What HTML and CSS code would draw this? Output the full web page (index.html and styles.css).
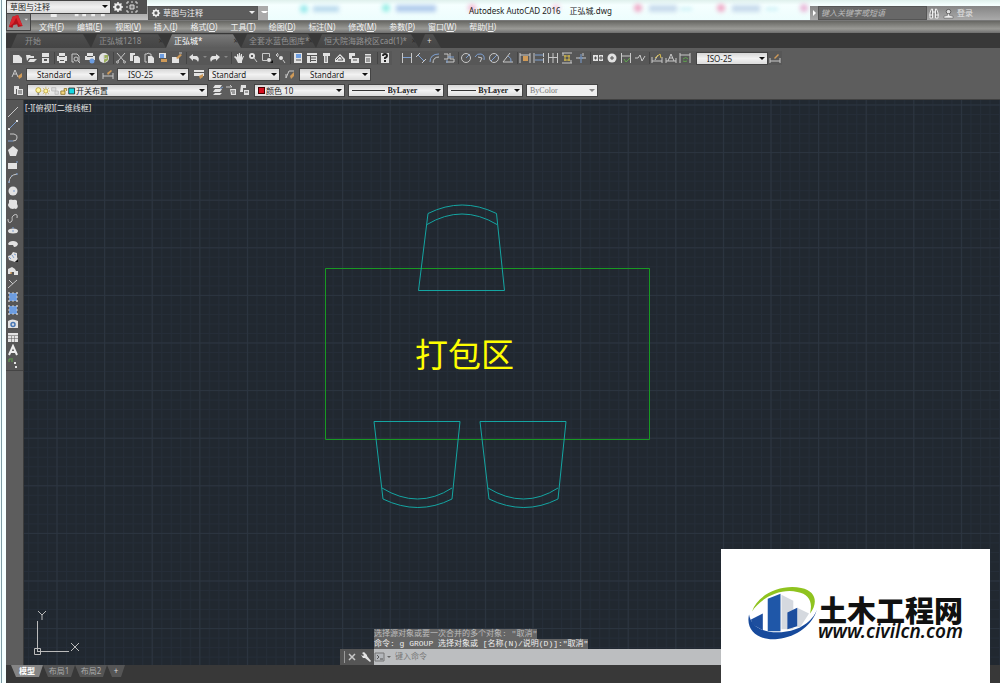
FILE: index.html
```html
<!DOCTYPE html>
<html lang="zh-CN">
<head>
<meta charset="utf-8">
<meta name="viewport" content="width=device-width, initial-scale=1">
<title>Autodesk AutoCAD 2016 正弘城.dwg</title>
<link rel="stylesheet" href="styles.css">
</head>
<body>
<div class="app">
  <header class="titlebar">
    <svg class="backdrop" aria-hidden="true">
      <defs><filter id="soft" x="-50%" y="-50%" width="200%" height="200%"><feGaussianBlur stdDeviation="2"/></filter></defs>
      <g filter="url(#soft)" opacity=".75">
        <circle cx="298" cy="9" r="4" fill="#7fe3e6"/><rect x="307" y="6" width="26" height="6" fill="#a9cfe8"/>
        <circle cx="380" cy="8" r="4" fill="#7de8de"/><rect x="390" y="5" width="40" height="7" fill="#9dbbe6"/>
        <circle cx="466" cy="8" r="4" fill="#f3a9c8"/><circle cx="550" cy="8" r="4" fill="#f5c3da"/>
        <circle cx="632" cy="8" r="4" fill="#ee8fb5"/><rect x="643" y="5" width="28" height="7" fill="#b9cfe6"/><rect x="674" y="8" width="12" height="2" fill="#a5e2ee"/>
        <circle cx="715" cy="8" r="4" fill="#ee8fb5"/><rect x="726" y="5" width="28" height="7" fill="#b9cfe6"/><rect x="760" y="8" width="12" height="2" fill="#a5e2ee"/>
        <circle cx="798" cy="8" r="4" fill="#e5a0cb"/>
      </g>
    </svg>
    <div class="quick">
      <svg class="hidden-row" viewBox="0 0 120 8" aria-hidden="true"><path d="M5 0h8v4H5zM37 0h5v3h-5zM47 0h5v3h-5zM59 0h5v3h-5zM72 0h5v3h-5z" fill="#eee"/></svg>
      <label class="combo dark"><svg class="lead" viewBox="0 0 12 12"><circle cx="6" cy="6" r="3" fill="none" stroke="#eee" stroke-width="2"/><path d="M6 1v2M6 9v2M1 6h2M9 6h2M2.500 2.500l1.300 1.300M8.200 8.200l1.300 1.300M9.500 2.500L8.200 3.800M3.800 8.200L2.500 9.500" stroke="#eee" stroke-width="1.500"/></svg>
        <select aria-label="快速访问工作空间"><option>草图与注释</option></select></label>
      <button class="drop" aria-label="自定义快速访问"></button>
    </div>
    <h1 class="caption"><span>Autodesk AutoCAD 2016</span><span>正弘城.dwg</span></h1>
    <div class="account">
      <button class="expand" aria-label="展开搜索"><svg viewBox="0 0 8 12"><path d="M3 3l3 3-3 3z" fill="#fff"/></svg></button>
      <input class="search" type="search" aria-label="搜索" placeholder="键入关键字或短语">
      <button class="icon" aria-label="查找"><svg viewBox="0 0 12 12"><path d="M2 11V6l1.500-4h1V11zM7.500 11V2h1L10 6v5zM5 5h2M1 8h3.500M7.500 8H11" fill="#777" stroke="#eee"/></svg></button>
      <button class="login"><svg viewBox="0 0 12 12"><circle cx="6" cy="4" r="2.500" fill="#ddd" stroke="#333" stroke-width=".7"/><path d="M5 6h2v2l4 1v2H1V9l4-1z" fill="#eee" stroke="#444" stroke-width=".5"/></svg>登录</button>
    </div>
  </header>

  <div class="workspace">
    <label class="combo"><select aria-label="工作空间"><option>草图与注释</option></select></label>
    <button class="icon" aria-label="工作空间设置"><svg viewBox="0 0 12 12"><circle cx="6" cy="6" r="2.800" fill="none" stroke="#eee" stroke-width="2"/><path d="M6 1v2M6 9v2M1 6h2M9 6h2M2.500 2.500l1.300 1.300M8.200 8.200l1.300 1.300M9.500 2.500L8.200 3.800M3.800 8.200L2.500 9.500" stroke="#eee" stroke-width="1.500"/></svg></button>
    <button class="icon" aria-label="工作空间外观"><svg viewBox="0 0 12 12"><path d="M1 3V1h2M9 1h2v2M11 9v2H9M3 11H1V9M5 1h2M5 11h2M1 5v2M11 5v2" fill="none" stroke="#ddd"/><path d="M4 4h4v4H4z" fill="#777" stroke="#ddd"/></svg></button>
  </div>
  <button class="appmenu" aria-label="应用程序菜单"><svg viewBox="0 0 24 16"><path d="M2 13L6 2l6-2 5 12-5 1-1-3-4 1-1 3z" fill="#b3121b"/><path d="M6 2l6-2 5 12-4-2-3-7-3 6-5 4z" fill="#d9272f"/><path d="M19 4h4l-2 2z" fill="#ddd"/></svg></button>

  <nav class="menubar" aria-label="菜单">
    <a href="#">文件(<u>F</u>)</a><a href="#">编辑(<u>E</u>)</a><a href="#">视图(<u>V</u>)</a><a href="#">插入(<u>I</u>)</a><a href="#">格式(<u>O</u>)</a><a href="#">工具(<u>T</u>)</a><a href="#">绘图(<u>D</u>)</a><a href="#">标注(<u>N</u>)</a><a href="#">修改(<u>M</u>)</a><a href="#">参数(<u>P</u>)</a><a href="#">窗口(<u>W</u>)</a><a href="#">帮助(<u>H</u>)</a>
  </nav>

  <nav class="filetabs" aria-label="文件">
    <a class="ftab start" href="#">开始</a>
    <a class="ftab" href="#">正弘城1218<i>×</i></a>
    <a class="ftab active" href="#">正弘城*<i>×</i></a>
    <a class="ftab" href="#">全套水蓝色图库*<i>×</i></a>
    <a class="ftab wide" href="#">恒大院海路校区cad(1)*<i>×</i></a>
    <a class="ftab plus" href="#" aria-label="新建图形">+</a>
  </nav>

  <div class="toolbars">
    <div class="bar">
      <div class="group">
        <button class="icon" aria-label="新建"><svg viewBox="0 0 12 12"><path class="f" d="M2 3h6l3 3v5H2z"/></svg></button>
        <button class="icon" aria-label="打开"><svg viewBox="0 0 12 12"><path class="f" d="M1 3h4l1 1h3v2H4l-2 3zM5 7h7l-3 3H3z"/></svg></button>
        <button class="icon" aria-label="保存"><svg viewBox="0 0 12 12"><path class="f" d="M3 1h7v4H3zM3 6h7v5H3z"/><path class="k" d="M5 7h3v2H5z"/></svg></button>
        <span class="sep"></span>
        <button class="icon" aria-label="打印"><svg viewBox="0 0 12 12"><path class="f" d="M3 1h6v3h2v5H9v2H3V9H1V4h2z"/><path class="k" d="M3 4h6v1H3zM4 8h4v1H4z"/></svg></button>
        <button class="icon" aria-label="打印预览"><svg viewBox="0 0 12 12"><path class="s" d="M9 10V4L7 2H2v8h2"/><circle class="s" cx="6" cy="7" r="2"/><path class="s" d="M8 9l2 2"/></svg></button>
        <button class="icon" aria-label="发布"><svg viewBox="0 0 12 12"><path class="f" d="M3 1h6v3h2v4H1V4h2z"/><path class="k" d="M3 4h6v1H3z"/><circle class="b" cx="8" cy="9" r="2.500"/></svg></button>
        <button class="icon" aria-label="三维打印"><svg viewBox="0 0 12 12"><circle class="f" cx="6" cy="6" r="5"/><path class="g" d="M6 3h4v5l-4 3z"/><path class="s" d="M6 3v4l3-1"/></svg></button>
        <span class="sep"></span>
        <button class="icon" aria-label="剪切"><svg viewBox="0 0 12 12"><path class="s" d="M2 1l7 8M10 1L3 9"/><circle class="s" cx="2.500" cy="10" r="1"/><circle class="s" cx="9.500" cy="10" r="1"/></svg></button>
        <button class="icon" aria-label="复制"><svg viewBox="0 0 12 12"><path class="f" d="M1 1h5v8H1zM5 4h4l2 2v5H5z"/><path class="d" d="M4.500 10V3.500H8"/></svg></button>
        <button class="icon" aria-label="粘贴"><svg viewBox="0 0 12 12"><path class="s" d="M4 10H2V2h2l1-1 2 1h1v2"/><path class="f" d="M5 4h4l2 2v5H5z"/></svg></button>
        <button class="icon" aria-label="特性匹配"><svg viewBox="0 0 12 12"><path class="f" d="M2 1h7v5H2z"/><path class="b" d="M3 2h4v4H3z"/><path class="o" d="M4 7h6v3H4z"/></svg></button>
        <button class="icon" aria-label="块编辑器"><svg viewBox="0 0 12 12"><path class="f" d="M1 5h7v6H1z"/><path class="o" d="M5 6l4-4 2 1-4 4z"/><path class="s" d="M8 1h3"/></svg></button>
        <span class="sep"></span>
        <button class="icon" aria-label="放弃"><svg viewBox="0 0 12 12"><path class="f" d="M1 5l4-3v2h4q3 2 1 6Q9 7 5 7v2z"/></svg></button>
        <button class="tiny" aria-label="放弃列表"></button>
        <button class="icon" aria-label="重做"><svg viewBox="0 0 12 12"><path class="f" d="M11 5L7 2v2H3Q0 6 2 10q1-3 5-3v2z"/></svg></button>
        <button class="tiny" aria-label="重做列表"></button>
        <span class="sep"></span>
        <button class="icon" aria-label="平移"><svg viewBox="0 0 12 12"><path class="f" d="M3 7L1 5l1-1 2 1V2h1v3l1-4h1v4l1-3h1v4l1-2h1L9 9v2H5z"/></svg></button>
        <button class="icon" aria-label="缩放"><svg viewBox="0 0 12 12"><circle class="f" cx="5" cy="4" r="3"/><path class="s" d="M7 6l3 4"/><path class="k" d="M4 3h2v2H4z"/></svg></button>
        <button class="icon" aria-label="窗口缩放"><svg viewBox="0 0 12 12"><path class="s" d="M6 8.500H1.500v-7h7V5"/><circle class="f" cx="8" cy="8" r="2"/><path class="kk" d="M9 11h3V8z"/></svg></button>
        <button class="icon" aria-label="上一个"><svg viewBox="0 0 12 12"><path class="s" d="M4 3H1l2-2M1 3l2 2"/><circle class="f" cx="6" cy="6" r="2"/><path class="s" d="M8 8l2 3"/></svg></button>
        <span class="sep"></span>
        <button class="icon" aria-label="特性"><svg viewBox="0 0 12 12"><path class="f" d="M2 1h8v10H2z"/><path class="b" d="M4 2h5v4H4z"/><path class="d" d="M4 8h5"/></svg></button>
        <button class="icon" aria-label="设计中心"><svg viewBox="0 0 12 12"><path class="f" d="M1 1h10v10H1z"/><path class="d" d="M1 3.500h10M4.500 3v7M5 6h5M5 8.500h5"/></svg></button>
        <button class="icon" aria-label="工具选项板"><svg viewBox="0 0 12 12"><path class="f" d="M3 1h7v3H8v7H4V4H3z"/><path class="d" d="M5 5h2M5 7h2M5 9h2"/></svg></button>
        <button class="icon" aria-label="图纸集"><svg viewBox="0 0 12 12"><path class="f" d="M1 7l5-5 5 5v3H1z"/><path class="d" d="M2 8l4-4 3 4H4"/></svg></button>
        <button class="icon" aria-label="标记集"><svg viewBox="0 0 12 12"><path class="f" d="M1 1h6v3H4v2h7v5H3V7H1z"/><path class="d" d="M5 8h4M8 3h3"/></svg></button>
        <button class="icon" aria-label="计算器"><svg viewBox="0 0 12 12"><path class="f" d="M3 2h6v9H3z"/><path class="d" d="M3 4h6M5 6v4M7 6v4"/></svg></button>
        <span class="sep"></span>
        <button class="icon" aria-label="帮助"><svg viewBox="0 0 12 12"><path class="f" d="M2 1h8v10H2z"/><path class="kk2" d="M4 4q0-2 2-2t2 2q0 1-2 2v1M6 8v2"/></svg></button>
      </div>
      <div class="group">
        <button class="icon" aria-label="线性"><svg viewBox="0 0 12 12"><path class="s" d="M1.500 1v10M10.500 1v10"/><path class="bs" d="M2 5.500h8"/></svg></button>
        <button class="icon" aria-label="对齐"><svg viewBox="0 0 12 12"><path class="s" d="M1 5l4-4M7 11l4-4"/><path class="bs" d="M3 3l6 6"/></svg></button>
        <button class="icon" aria-label="弧长"><svg viewBox="0 0 12 12"><path class="bs" d="M1 10Q1 2 10 2"/><path class="s" d="M4 11q0-6 6-6"/></svg></button>
        <button class="icon" aria-label="坐标"><svg viewBox="0 0 12 12"><path class="s" d="M1 2h4v5H1M7 1v6h4M3 10h8V7"/><path class="bs" d="M5 5h6M4 11V8"/></svg></button>
        <span class="sep"></span>
        <button class="icon" aria-label="半径"><svg viewBox="0 0 12 12"><circle class="s" cx="6" cy="6" r="4.500"/><path class="bs" d="M6 6l4-4"/></svg></button>
        <button class="icon" aria-label="折弯"><svg viewBox="0 0 12 12"><path class="bs" d="M1 5q2-4 6-3 4 1 3 6"/><path class="s" d="M4 5l4 1-2 4"/></svg></button>
        <button class="icon" aria-label="直径"><svg viewBox="0 0 12 12"><circle class="s" cx="6" cy="6" r="4.500"/><path class="bs" d="M3 9l6-6"/></svg></button>
        <button class="icon" aria-label="角度"><svg viewBox="0 0 12 12"><path class="s" d="M8 1L1 10h10"/><path class="bs" d="M6 4q4 2 3 6"/></svg></button>
        <span class="sep"></span>
        <button class="icon" aria-label="快速标注"><svg viewBox="0 0 12 12"><path class="s" d="M1 1v10M11 1v10M1 3h10"/><path class="o" d="M4 4h5v5H4z"/></svg></button>
        <button class="icon" aria-label="基线"><svg viewBox="0 0 12 12"><path class="s" d="M1 1v10M10.500 1v4M10.500 6v5"/><path class="bs" d="M2 3h8M2 8h8"/></svg></button>
        <button class="icon" aria-label="连续"><svg viewBox="0 0 12 12"><path class="s" d="M1.500 1v10M6 1v10M10.500 1v10M1 5.500h10"/></svg></button>
        <button class="icon" aria-label="等距标注"><svg viewBox="0 0 12 12"><path class="s" d="M1 1h10M1 11h10M2 1v3M10 8v3"/><path class="ys" d="M3 4h6M3 8h6M4 3v6M8 3v6"/></svg></button>
        <button class="icon" aria-label="折断标注"><svg viewBox="0 0 12 12"><path class="s" d="M1 6h4M7 6h4M8 1v3"/><path class="bs" d="M6 2v9M4 6h4"/></svg></button>
        <span class="sep"></span>
        <button class="icon" aria-label="公差"><svg viewBox="0 0 12 12"><path class="f" d="M1 3h10v6H1z"/><path class="d" d="M2 6h3M3.500 4.500v3M6.500 3v6M8 5h2v2H8z"/></svg></button>
        <button class="icon" aria-label="圆心标记"><svg viewBox="0 0 12 12"><circle class="f" cx="6" cy="6" r="4.500"/><path class="d" d="M6 4v4M4 6h4"/></svg></button>
        <button class="icon" aria-label="检验"><svg viewBox="0 0 12 12"><path class="s" d="M1.500 1v10M10.500 1v10M1 4h10"/><path class="gs" d="M4 7l2 3 4-4"/></svg></button>
        <button class="icon" aria-label="折弯线性"><svg viewBox="0 0 12 12"><path class="s" d="M1 6h3l2-3 2 6 3-5"/></svg></button>
        <span class="sep"></span>
        <button class="icon" aria-label="编辑标注"><svg viewBox="0 0 12 12"><path class="s" d="M1 5v6M11 5v6M1 9h10M4 8l3-5"/><path class="ys" d="M4 6l5-4 1 4"/></svg></button>
        <button class="icon" aria-label="编辑标注文字"><svg viewBox="0 0 12 12"><path class="s" d="M1 6v5M11 6v5M1 9h10M3 9l3-7 3 7M4 6h4"/></svg></button>
        <button class="icon" aria-label="标注更新"><svg viewBox="0 0 12 12"><path class="s" d="M1 1v10M11 1v10M1 3h10"/><path class="gs" d="M4 7q3-3 5 0M8 9q-2 1-4 0"/></svg></button>
        <label class="combo w70 pad"><select aria-label="标注样式"><option>ISO-25</option></select></label>
        <button class="icon" aria-label="标注样式管理"><svg viewBox="0 0 12 12"><path class="s" d="M1 6v5M11 6v5M1 9h10"/><path class="o" d="M5 6l4-4 1 1-4 4z"/></svg></button>
      </div>
    </div>

    <div class="bar styles">
      <button class="icon" aria-label="文字样式"><svg viewBox="0 0 12 12"><path class="s" d="M1 9l3-7 3 7M2 6h4"/><path class="o" d="M7 8l4-3v4l-3 2z"/></svg></button>
      <label class="combo w70 pad"><select aria-label="文字样式"><option>Standard</option></select></label>
      <button class="icon" aria-label="标注样式"><svg viewBox="0 0 12 12"><path class="s" d="M1 5v6M11 5v6M1 8h10"/><path class="o" d="M5 5l4-3 1 1-4 4z"/></svg></button>
      <label class="combo w70 pad"><select aria-label="标注样式名"><option>ISO-25</option></select></label>
      <button class="icon" aria-label="表格样式"><svg viewBox="0 0 12 12"><path class="f" d="M1 2h10v6H1z"/><path class="d" d="M1 4.500h10"/><path class="o" d="M6 8l4-2v3l-3 2z"/></svg></button>
      <label class="combo w70"><select aria-label="表格样式"><option>Standard</option></select></label>
      <button class="icon" aria-label="多重引线样式"><svg viewBox="0 0 12 12"><path class="s" d="M2 10l3-7h5M2 10V6"/><path class="o" d="M6 8l4-4v4l-3 3z"/></svg></button>
      <label class="combo w70 pad"><select aria-label="多重引线样式"><option>Standard</option></select></label>
    </div>

    <div class="bar props">
      <button class="icon" aria-label="图层特性"><svg viewBox="0 0 12 12"><path class="f" d="M2 2h5v3H4v5H2zM5 5h6v6H5z"/><path class="d" d="M6 7h4M6 9h4"/></svg></button>
      <label class="combo layer"><svg class="lead" viewBox="0 0 50 12"><circle cx="5" cy="5" r="3" fill="#fff7a0" stroke="#b89c2e"/><path d="M4 8h2v3H4z" fill="#888"/><circle cx="14" cy="6" r="2.500" fill="#fff3a0" stroke="#b99b30"/><path d="M14 1v1M14 10v1M9 6h1M18 6h1M10.500 2.500l1 1M16.500 8.500l1 1M17.500 2.500l-1 1M11.500 8.500l-1 1" stroke="#b99b30"/><path d="M21 2h5v4h-5zM25 6h4v4h-4z" fill="#ddd" stroke="#bbb"/><path d="M32 6h5v4h-5zM36 6V3h3v3" fill="#f4d780" stroke="#8b7428"/><path d="M41.500 2.500h7v7h-7z" fill="#14d8e2" stroke="#222"/></svg>
        <select aria-label="图层"><option>开关布置</option></select></label>
      <span class="trio">
        <button class="icon" aria-label="置为当前图层"><svg viewBox="0 0 12 12"><path class="f" d="M3 1h7L8 4H1zM3 5h7L8 8H1zM3 9h7l-2 2H1z"/><path class="bs" d="M8 5l3-2"/></svg></button>
        <button class="icon" aria-label="上一个图层"><svg viewBox="0 0 12 12"><path class="s" d="M1 3h6L5 1"/><path class="f" d="M5 5h6v6H6z"/><path class="d" d="M6 7h4M7 9h3"/></svg></button>
        <button class="icon" aria-label="图层状态"><svg viewBox="0 0 12 12"><path class="f" d="M3 1h5v3H5v4H2zM6 6h5v5H6z"/><path class="d" d="M7 8h3"/></svg></button>
      </span>
      <label class="combo w90 color"><span class="swatch"></span><select aria-label="颜色"><option>颜色 10</option></select></label>
      <label class="combo w95 line"><span class="rule"></span><select aria-label="线型"><option>ByLayer</option></select></label>
      <label class="combo w75 line"><span class="rule"></span><select aria-label="线宽"><option>ByLayer</option></select></label>
      <label class="combo w70 off"><select aria-label="打印样式" disabled><option>ByColor</option></select></label>
    </div>
  </div>

  <div class="work">
    <aside class="palette">
      <div class="tools">
        <button class="icon" aria-label="直线"><svg viewBox="0 0 12 12"><path class="s" d="M1 11L11 1"/></svg></button>
        <button class="icon" aria-label="构造线"><svg viewBox="0 0 12 12"><path class="bs" d="M2 10l8-8"/><path class="f" d="M1 9h2v2H1zM9 1h2v2H9z"/></svg></button>
        <button class="icon" aria-label="多段线"><svg viewBox="0 0 12 12"><path class="s" d="M3 2h4q4 1 3 4 0 3-4 3"/><path class="bs" d="M6 9H1"/></svg></button>
        <button class="icon" aria-label="多边形"><svg viewBox="0 0 12 12"><path class="f" d="M6 1l5 4-2 6H3L1 5z"/></svg></button>
        <button class="icon" aria-label="矩形"><svg viewBox="0 0 12 12"><path class="f" d="M1 4h9v6H1z"/><path class="bs" d="M9 3h2"/></svg></button>
        <button class="icon" aria-label="圆弧"><svg viewBox="0 0 12 12"><path class="s" d="M2 11Q2 3 10 2"/><path class="bs" d="M1 10h2M9 2h2M4 4h1"/></svg></button>
        <button class="icon" aria-label="圆"><svg viewBox="0 0 12 12"><circle class="f" cx="6" cy="6" r="4.500"/><path class="bs" d="M6 6h2"/></svg></button>
        <button class="icon" aria-label="修订云线"><svg viewBox="0 0 12 12"><path class="f" d="M2 2q2-1 4 0 3-1 4 1v3q2 3-1 5-2-1-3 0-3 0-4-2-2-2 0-4z"/></svg></button>
        <button class="icon" aria-label="样条曲线"><svg viewBox="0 0 12 12"><path class="s" d="M1 7q0 5 3 3c3-3-1-4 3-7q4-2 3 3"/></svg></button>
        <button class="icon" aria-label="椭圆"><svg viewBox="0 0 12 12"><ellipse class="f" cx="6" cy="6" rx="5" ry="2.500"/><path class="bs" d="M6 2v2M5 6h2"/></svg></button>
        <button class="icon" aria-label="椭圆弧"><svg viewBox="0 0 12 12"><path class="f" d="M1 6q1-3 5-3t5 3q-1 3-4 3L6 7H2z"/></svg></button>
        <button class="icon" aria-label="插入块"><svg viewBox="0 0 12 12"><path class="f" d="M1 5l3-1 2-3 4 1v4l1 3-3 2-3-1-3-1z"/><path class="bs" d="M5 4l2 3M2 6l2 2M7 3l2 1"/><path class="kk" d="M8 11h3V8z"/></svg></button>
        <button class="icon" aria-label="创建块"><svg viewBox="0 0 12 12"><path class="f" d="M1 4l4-2 3 2 1 2h2v4H7V7H4v2H1z"/><circle class="o" cx="4" cy="8" r="1"/></svg></button>
        <button class="icon" aria-label="点"><svg viewBox="0 0 12 12"><path class="s" d="M2 2l4 4M1 10l9-8"/></svg></button>
        <button class="icon" aria-label="图案填充"><svg viewBox="0 0 12 12"><path class="b" d="M2 2h8v8H2z"/><path class="s" d="M1 2h10M1 10h10M2 1v10M10 1v10" stroke-dasharray="2 2"/></svg></button>
        <button class="icon" aria-label="渐变色"><svg viewBox="0 0 12 12"><path class="b" d="M2 2h8v8H2z"/><path class="s" d="M1 2h10M1 10h10M2 1v10M10 1v10" stroke-dasharray="2 2"/></svg></button>
        <button class="icon" aria-label="面域"><svg viewBox="0 0 12 12"><path class="f" d="M1 3q4-3 10 0v7H1z"/><circle cx="6" cy="6.500" r="2" fill="#d6dbe4" stroke="#4877b5" stroke-width="1.500"/></svg></button>
        <button class="icon" aria-label="表格"><svg viewBox="0 0 12 12"><path class="f" d="M1 2h10v9H1z"/><path class="d" d="M1 4.500h10M4.500 5v6M7.500 5v6M1 7.500h10" opacity=".5"/></svg></button>
        <button class="icon" aria-label="多行文字"><svg viewBox="0 0 12 12"><path d="M2 11L6 2l4 9M3.500 8h5" fill="none" stroke="#eee" stroke-width="2"/></svg></button>
        <button class="icon" aria-label="添加选定对象"><svg viewBox="0 0 12 12"><path class="gs" d="M2 5V2h4M4 4h2"/><path class="f" d="M7 5h2v2H7zM8 9h2v2H8z"/></svg></button>
      </div>
    </aside>

    <main class="canvas">
      <svg class="drawing" aria-label="图形">
        <defs>
          <pattern id="minor" width="9.520" height="9.520" patternUnits="userSpaceOnUse" x="32.500" y="4.500"><path d="M0 .5h9.520M.5 0v9.520" stroke="#252d38" fill="none"/></pattern>
          <pattern id="major" width="47.600" height="47.600" patternUnits="userSpaceOnUse" x="32.500" y="4.500"><path d="M0 .5h47.600M.5 0v47.600" stroke="#2c3540" fill="none"/></pattern>
        </defs>
        <rect width="100%" height="100%" fill="url(#minor)"/>
        <rect width="100%" height="100%" fill="url(#major)"/>
        <path class="table" d="M301.500 168.500h324v171h-324z"/>
        <g class="chairs">
          <path d="M394.500 190.500h86L472.500 113.500Q438 96.500 404 113.500zM403 124.500Q438 103.500 473 124.500"/>
          <path id="chair" d="M350 321.500h86L428 399Q394 416 359 399zM358 388Q394 410 428 388"/>
          <use href="#chair" x="106"/>
        </g>
        <text class="zone" x="391" y="267">打包区</text>
      </svg>
      <span class="viewlabel">[-][俯视][二维线框]</span>
      <svg class="ucs" viewBox="0 0 48 48" aria-hidden="true"><path d="M4.500 12v31M4.500 42.500H36M1.500 39.500h6v6h-6zM5 2l4 4 4-4M9 6v5M38 34l8 8M46 34l-8 8"/></svg>
      <div class="command">
        <output class="history"><span>选择源对象或要一次合并的多个对象: "取消"</span><span>命令: g GROUP 选择对象或 [名称(N)/说明(D)]:"取消"</span></output>
        <div class="prompt">
          <span class="grip"></span>
          <button class="icon" aria-label="关闭"><svg viewBox="0 0 12 12"><path class="s" d="M3 3l6 6M9 3L3 9" stroke-width="1.500"/></svg></button>
          <button class="icon" aria-label="自定义"><svg viewBox="0 0 12 12"><path class="f" d="M2 2l2-1 3 3v1l4 5-1 1-5-4H3L1 4l2 1 1-1z"/></svg></button>
          <label class="entry"><svg viewBox="0 0 18 12"><path d="M1 2h9v8H1z" fill="#b4b7bb" stroke="#777"/><path d="M3 4l2 2-2 2M6 8h3" fill="none" stroke="#555"/><path d="M13 5h4l-2 2z" fill="#666"/></svg><input type="text" aria-label="命令" placeholder="键入命令"></label>
        </div>
      </div>
    </main>
  </div>

  <footer class="layouts">
    <a class="ltab active" href="#">模型</a><a class="ltab" href="#">布局1</a><a class="ltab" href="#">布局2</a><a class="ltab add" href="#" aria-label="新建布局">+</a>
  </footer>
</div>

<div class="sponsor">
  <svg viewBox="0 0 72 60" aria-hidden="true">
    <path d="M6 26C12 8 36-2 56 2c16 3 17 16 9 26C68 16 64 8 52 6 34 2 14 13 6 26z" fill="#8fc31f"/>
    <path d="M3 29C-1 46 14 56 32 54 52 52 68 39 72 24 68 36 54 46 36 47 16 48 5 41 3 29z" fill="#174a9c"/>
    <path d="M36 9l12 6v29H36zM52 22l12 6-9 14h-3z" fill="#d5d9df"/>
    <path d="M22 13l13-5v38H22z" fill="#1f57a8"/><path d="M5 34l12-6v17L6 39z" fill="#1d4e9e"/><path d="M42 27l10-5v19l-10 3z" fill="#1d4e9e"/>
  </svg>
  <div class="brand"><strong>土木工程网</strong><em>www.civilcn.com</em></div>
</div>
</body>
</html>
```
FILE: styles.css
```css
* { box-sizing: border-box; }

body {
  margin: 0;
  background: #eefafa;
  color: #e4e4e4;
  font: 8px/12px "Noto Sans", "Noto Sans CJK SC", sans-serif;
  overflow: hidden;
}

a { color: inherit; text-decoration: none; }
button, input, select { font: inherit; color: inherit; margin: 0; padding: 0; border: 0; border-radius: 0; background: none; }
svg { display: block; }

.app {
  position: relative;
  display: flex;
  flex-direction: column;
  height: 100vh;
  margin-left: 2px;
  border-left: 4px solid #f5ffff;
  outline: 1px solid #7d9ba5;
}

/* icons */
.icon { width: 14px; height: 14px; flex: none; display: grid; place-items: center; }
.icon svg { width: 12px; height: 12px; }
.f { fill: #e2e2e2; }
.k { fill: #555; }
.kk { fill: #111; }
.b { fill: #6d9de0; }
.g { fill: #9aae5c; }
.o { fill: #cf9a58; }
.s, .bs, .gs, .ys, .d, .kk2 { fill: none; stroke: #c8c8c8; }
.bs { stroke: #7d9fd0; }
.gs { stroke: #5ea34d; }
.ys { stroke: #d9bd4b; }
.d { stroke: #555; }
.kk2 { stroke: #222; stroke-width: 2; }

/* drop-down lists */
.combo { position: relative; display: block; flex: none; height: 13px; background: linear-gradient(#d6d6d6, #f2f2f2 50%, #dcdcdc); color: #222; border: 1px solid #444; }
.combo select { appearance: none; display: block; width: 100%; height: 11px; line-height: 11px; padding-left: 3px; opacity: 1; color: inherit; }
.combo::after { content: ""; position: absolute; right: 2px; top: 4px; border: 3px solid transparent; border-top: 3px solid #111; border-bottom: 0; }
.combo .lead { position: absolute; left: 2px; top: 1px; height: 10px; }
.w70 { width: 72px; }
.w75 { width: 76px; }
.w90 { width: 91px; }
.w95 { width: 96px; }
.pad select { padding-left: 10px; }

/* title bar */
.titlebar { position: relative; height: 21px; padding-top: 6px; display: flex; background: linear-gradient(#dff0ec, #f5ffff 25%, #edfdfd); border-bottom: 1px solid #777; }
.backdrop { position: absolute; inset: 0; width: 100%; height: 100%; }
.quick { position: relative; display: flex; justify-content: flex-end; width: 262px; background: linear-gradient(#909090, #c2c2c2); }
.hidden-row { flex: none; align-self: flex-end; width: 112px; height: 6px; }
.quick .combo { width: 110px; height: 14px; border-color: #555; }
.dark { background: #5c5c5c; color: #eee; }
.quick .dark select { padding-left: 14px; }
.dark::after { border-top-color: #eee; }
.drop { width: 10px; background: #aaa; }
.drop::after { content: ""; display: block; margin-left: 3px; border: 2px solid transparent; border-top-color: #fff; }
.caption { position: relative; flex: 1; margin: 0; display: flex; gap: 9px; padding-left: 201px; font-size: 8px; line-height: 10px; font-weight: 400; color: #222; white-space: nowrap; }
.account { position: relative; display: flex; width: 190px; background: linear-gradient(#858585, #aaa); }
.expand { width: 8px; }
.expand svg { width: 8px; }
.search { width: 109px; padding-left: 2px; background: #686868; border: 1px solid #555; font-style: italic; outline: 0; }
.search::placeholder { color: #bbb; opacity: 1; }
.login { display: flex; align-items: center; gap: 3px; margin-left: 2px; }
.login svg { width: 11px; }

.workspace { position: absolute; left: 0; top: 0; display: flex; width: 141px; height: 14px; background: #505050; }
.workspace .combo { width: 105px; height: 14px; }
.appmenu { position: absolute; left: 0; top: 13px; width: 25px; height: 18px; background: linear-gradient(#777, #999); border: 1px solid #444; }
.appmenu svg { width: 22px; }

/* menus and drawing tabs */
.menubar { display: flex; height: 12px; padding-left: 33px; gap: 13px; background: linear-gradient(#676763, #9a9a96 65%, #6d6d6d); white-space: nowrap; }
.menubar a { color: #f2f2f2; }
.filetabs { display: flex; height: 15px; padding-left: 5px; background: #383838; color: #929292; line-height: 15px; white-space: nowrap; }
.ftab { position: relative; width: 75px; padding-left: 8px; background: linear-gradient(#505050, #444); clip-path: polygon(0 100%, 6px 8%, calc(100% - 8px) 8%, 100% 100%); }
.ftab i { position: absolute; right: 3px; color: #2c2c2c; font-style: normal; }
.ftab.start { width: 80px; padding-left: 14px; }
.ftab.active { background: linear-gradient(#7c7c7c, #5c5c5c); color: #fff; }
.ftab.wide { width: 103px; }
.ftab.plus { width: 22px; color: #ddd; }

/* toolbars */
.toolbars { padding-top: 2px; height: 52px; background: #5d5d5d; border-bottom: 1px solid #414141; }
.bar { display: flex; align-items: center; height: 16px; padding-left: 4px; }
.group { display: flex; align-items: center; height: 14px; margin-right: 8px; background: #575757; }
.group .combo { margin-left: 4px; }
.sep { width: 3px; height: 12px; border-right: 1px solid #444; }
.tiny { width: 7px; height: 12px; }
.tiny::after { content: ""; display: block; margin: 2px; border: 2px solid transparent; border-top-color: #888; }
.styles { gap: 2px; }
.styles .combo { margin: 0 1px 0 0; }
.props { gap: 3px; padding-left: 5px; }
.props .icon { margin-right: -1px; }
.layer { width: 181px; }
.layer .lead { width: 50px; }
.layer select { padding-left: 48px; }
.trio { display: flex; margin: 0 1px 0 0; }
.color select { padding-left: 11px; }
.swatch { position: absolute; left: 3px; top: 2px; width: 7px; height: 7px; background: #d51020; border: 1px solid #400; }
.line, .off { font-family: "Liberation Serif", "Noto Sans CJK SC", serif; font-weight: 700; }
.line select { padding-left: 41%; }
.rule { position: absolute; left: 3px; right: 62%; top: 5px; height: 1px; background: #333; }
.off { background: #eee; color: #777; font-weight: 400; }
.off::after { border-top-color: #888; }

/* work area */
.work { flex: 1; min-height: 0; display: flex; }
.palette { width: 18px; background: #5d5d5d; border-right: 1px solid #3b3b3b; }
.tools { display: flex; flex-direction: column; justify-content: space-between; height: 271px; padding: 5px 0 0 0; border-bottom: 1px solid #444; background: #565656; }
.tools .icon { height: 13px; }
.canvas { position: relative; flex: 1; min-width: 0; background: #212830; overflow: hidden; }
.drawing { width: 100%; height: 100%; }
.table { fill: none; stroke: #189a22; }
.chairs { fill: none; stroke: #14a5a2; }
.zone { font: 33px "Noto Sans CJK SC", sans-serif; fill: #ff0; }
.viewlabel { position: absolute; left: 1px; top: 2px; }
.ucs { position: absolute; left: 9px; bottom: 8px; width: 48px; height: 48px; fill: none; stroke: #bbb; }

.command { position: absolute; left: 316px; right: 10px; bottom: 0; font-family: "Liberation Mono", "Noto Sans CJK SC", monospace; }
.history { display: flex; flex-direction: column; align-items: flex-start; margin-left: 34px; line-height: 10px; }
.history span { background: #666; color: #eee; }
.history span:first-child { color: #bbb; }
.prompt { display: flex; align-items: center; height: 16px; background: #555; }
.grip { width: 5px; height: 12px; border-right: 1px solid #999; }
.entry { flex: 1; display: flex; align-items: center; height: 100%; margin-left: 1px; background: #bcbec0; }
.entry svg { width: 18px; height: 12px; }
.entry input { flex: 1; padding-left: 3px; outline: 0; color: #444; }
.entry input::placeholder { color: #777; opacity: 1; }

.layouts { display: flex; height: 18px; padding-left: 5px; background: #383838; color: #aaa; line-height: 12px; }
.ltab { width: 32px; height: 12px; text-align: center; background: #555; clip-path: polygon(0 0, 100% 0, calc(100% - 4px) 100%, 5px 100%); }
.ltab.active { background: #858585; color: #fff; font-weight: 700; }
.ltab.add { width: 18px; color: #ddd; }

.sponsor { position: absolute; right: 10px; bottom: 0; display: flex; width: 269px; height: 134px; padding: 37px 0 0 25px; background: #fff; color: #111; }
.sponsor svg { width: 71px; height: 59px; flex: none; }
.brand { display: flex; flex-direction: column; padding-top: 10px; margin-left: 1px; white-space: nowrap; }
.brand strong { font: 900 29px/26px "Noto Sans CJK SC", sans-serif; }
.brand em { font: italic 600 19px/18px "Noto Sans", sans-serif; }
```
